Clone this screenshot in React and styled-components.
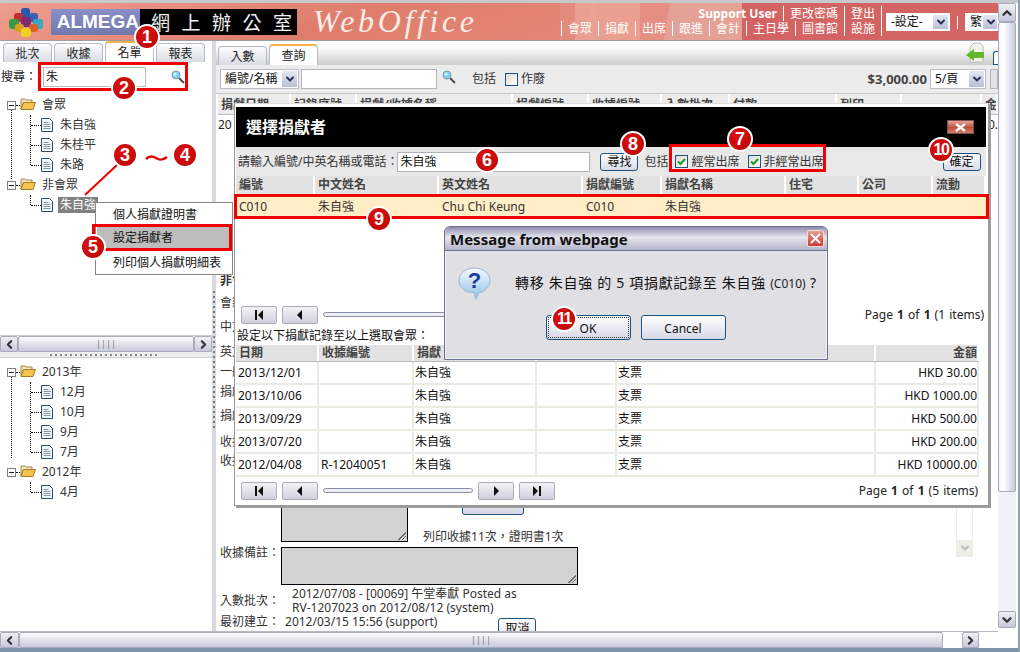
import styled, { createGlobalStyle } from 'styled-components'
import { ChevronUp, ChevronDown, ChevronLeft, ChevronRight } from 'lucide-react'

const FONT = `"Noto Sans", "Noto Sans CJK TC", sans-serif`

const GlobalStyle = createGlobalStyle`
    html, body {
        margin: 0;
        padding: 0;
        width: 1020px;
        height: 652px;
        overflow: hidden;
        background: #fff;
    }
    * { box-sizing: border-box; }
`

const Page = styled.div`
    position: relative;
    width: 1020px;
    height: 652px;
    overflow: hidden;
    display: flex;
    flex-direction: column;
    background: #fff;
    color: #222;
    font: 12px/16px ${FONT};
    border-right: 2px solid #8d9db0;
`
const TopStrip = styled.div`
    height: 3px;
    background: #c6c8cc;
    flex: none;
`
const Body = styled.div`
    flex: 1;
    min-height: 0;
    display: flex;
`
const BottomLine = styled.div`
    height: 4px;
    flex: none;
    background: #7f93a8;
`
const Window = styled.div`
    width: 998px;
    display: flex;
    flex-direction: column;
    min-width: 0;
`

/* header */
const Header = styled.header`
    height: 37px;
    flex: none;
    display: flex;
    align-items: center;
    overflow: hidden;
    background:
        linear-gradient(90deg, transparent 0 742px, #d46464 742px),
        linear-gradient(100deg, transparent 0 660px, #e5a195 660px 742px, transparent 742px),
        repeating-linear-gradient(90deg, transparent 0 590px, #eaa294 590px 596px, transparent 596px 612px),
        linear-gradient(90deg, transparent 0 560px, #e28c7d 560px 575px, #eb9f90 575px 640px, #e48f81 640px),
        linear-gradient(160deg, #ee9d8d 0%, #df7d6c 35%, #e58a78 70%, #e99684 100%);
`
const LogoWrap = styled.div`
    width: 51px;
    height: 37px;
    flex: none;
    display: flex;
    align-items: center;
    justify-content: center;
`
const Brand = styled.div`
    width: 89px;
    height: 26px;
    flex: none;
    background: linear-gradient(#8a90c6, #7278ae);
    color: #fff;
    font: bold 19px/26px "Liberation Sans", sans-serif;
    text-align: right;
    padding-right: 1px;
`
const BrandCn = styled.div`
    width: 157px;
    height: 26px;
    flex: none;
    background: #000;
    color: #f2f2f2;
    font: 19px/26px "Noto Sans CJK TC", serif;
    letter-spacing: 11.500px;
    padding-left: 11px;
    white-space: nowrap;
`
const WebOffice = styled.div`
    margin-left: 16px;
    width: 230px;
    flex: none;
    color: #f7ece6;
    font: italic 32px/37px "Liberation Serif", serif;
    letter-spacing: 3.600px;
`
const HeaderRight = styled.div`
    margin-left: auto;
    display: flex;
    align-items: flex-start;
    padding-top: 3px;
    height: 37px;
`
const NavStack = styled.div`
    display: flex;
    flex-direction: column;
    align-items: flex-end;
`
const NavLine = styled.div`
    display: flex;
    height: 15px;
    color: #fff;
    font-size: 12px;
    line-height: 15px;
    border-right: 1px solid #fff;
    margin-right: 1px;
`
const NavItem = styled.span`
    padding: 0 6px;
    border-left: ${p => (p.$plain ? 0 : '1px solid #fff')};
    font-weight: ${p => (p.$plain ? 700 : 400)};
    white-space: nowrap;
`
const HeaderSelects = styled.div`
    display: flex;
    align-items: center;
    gap: 7px;
    margin-left: 3px;
    padding-top: 7px;
`
const Pipe = styled.span`
    width: 1px;
    height: 13px;
    background: #fff;
`

/* fake select box */
const SelectBox = styled.div`
    width: ${p => p.$w}px;
    height: ${p => p.$h || 18}px;
    flex: none;
    display: flex;
    align-items: center;
    justify-content: space-between;
    background: #fff;
    border: 1px solid ${p => p.$line || '#b8bcc4'};
    padding-left: 4px;
    color: #111;
    font-size: 12px;
    white-space: nowrap;
    overflow: hidden;
`
const SelectArrow = styled.span`
    width: 17px;
    height: 100%;
    flex: none;
    display: flex;
    align-items: center;
    justify-content: center;
    background: linear-gradient(#e4e6f2, #b9bed6);
    border: 1px solid #fff;
    color: #2b3350;
`

/* main */
const Main = styled.div`
    flex: 1;
    min-height: 0;
    display: flex;
    border-top: 1px solid #9aa0a6;
`
const LeftPane = styled.aside`
    width: 212px;
    flex: none;
    display: flex;
    flex-direction: column;
`
const UpperPane = styled.div`
    height: 294px;
    flex: none;
    display: flex;
    flex-direction: column;
`
const TabStrip = styled.div`
    display: flex;
    align-items: flex-end;
    gap: 2px;
    padding-left: ${p => p.$pad}px;
    height: ${p => p.$h}px;
    flex: none;
    background: ${p => (p.$bar ? 'linear-gradient(#fff 20%, #cdcdcd)' : '#fff')};
`
const Tab = styled.div`
    width: 49px;
    height: ${p => (p.$active ? 21 : 19)}px;
    text-align: center;
    color: #222;
    font-size: 12px;
    line-height: 20px;
    border: 1px solid #b4bcc8;
    border-bottom: 0;
    border-radius: 4px 4px 0 0;
    background: ${p => (p.$active ? '#fff' : 'linear-gradient(#fdfdfd, #d9dbe4)')};
    border-top: ${p => (p.$active ? '2px solid #f3b24c' : '1px solid #b4bcc8')};
`
const SearchRow = styled.div`
    display: flex;
    align-items: center;
    height: 26px;
    margin-top: 2px;
    padding-left: 1px;
    flex: none;
`
const SearchInput = styled.div`
    width: 103px;
    height: 20px;
    margin-left: 6px;
    border: 1px solid #b8bcc4;
    padding-left: 2px;
    line-height: 18px;
`
const SearchSlot = styled.span`
    margin-left: 25px;
    display: flex;
`
const Tree = styled.div`
    position: relative;
    margin-top: ${p => p.$top}px;

    &::before {
        content: "";
        position: absolute;
        left: 11px;
        top: 14px;
        bottom: ${p => p.$lineEnd}px;
        border-left: 1px dotted #000;
    }
`
const TreeRow = styled.div`
    display: flex;
    align-items: center;
    height: 20px;
    color: #333;
    position: relative;
`
const Expander = styled.span`
    width: 9px;
    height: 9px;
    margin-left: 7px;
    flex: none;
    border: 1px solid #808080;
    background: #fff;
    position: relative;

    &::after {
        content: "";
        position: absolute;
        left: 1px;
        right: 1px;
        top: 3px;
        height: 1px;
        background: #222;
    }
`
const Stub = styled.span`
    width: ${p => p.$w}px;
    margin-left: ${p => p.$left || 0}px;
    flex: none;
    border-top: 1px dotted #000;
`
const RootLabel = styled.span`
    margin-left: 6px;
`
const TreeChildren = styled.div`
    position: relative;

    &::before {
        content: "";
        position: absolute;
        left: 30px;
        top: 0;
        bottom: 10px;
        border-left: 1px dotted #000;
    }
`
const LeafLabel = styled.span`
    margin-left: ${p => (p.$selected ? 5 : 7)}px;
    padding: 0 ${p => (p.$selected ? 2 : 0)}px;
    background: ${p => (p.$selected ? '#808080' : 'transparent')};
    color: ${p => (p.$selected ? '#fff' : '#333')};
`
const PaneScroll = styled.div`
    height: 17px;
    flex: none;
    display: flex;
    background: linear-gradient(#fbfbfd, #c9cadb);
    border-top: 1px solid #c8c8d0;
`
const ScrollBtn = styled.span`
    width: ${p => p.$w || 18}px;
    height: ${p => p.$h || 16}px;
    flex: none;
    display: flex;
    align-items: center;
    justify-content: center;
    color: #333;
    background: linear-gradient(#f0f0f6, #c6c8dc);
    border: 1px solid #a8acb8;
    border-radius: 2px;
`
const ScrollThumb = styled.span`
    flex: 1;
    border: 1px solid #a8acb8;
    border-radius: 2px;
    background: linear-gradient(#fbfbfd, #c9cadb);
    display: flex;
    align-items: center;
    justify-content: center;
    color: #777;
    font-size: 9px;
    line-height: 10px;
`
const HSplit = styled.div`
    height: 6px;
    flex: none;
    background: repeating-linear-gradient(90deg, #8a8a8a 0 2px, transparent 2px 5px) 50px 2px / 110px 2px no-repeat, #eeeeee;
    border-bottom: 1px solid #d0d0d0;
`
const Splitter = styled.div`
    width: 4px;
    flex: none;
    background: repeating-linear-gradient(#7a7a7a 0 2px, transparent 2px 5px) 1px 250px / 2px 140px no-repeat, #d8dae0;
`

/* right pane */
const RightPane = styled.section`
    flex: 1;
    min-width: 0;
    display: flex;
    flex-direction: column;
    overflow: hidden;
`
const GreenArrow = styled.span`
    margin-left: auto;
    margin-right: 1px;
    align-self: center;
    display: flex;
`
const PartTab = styled.span`
    width: 5px;
    height: 14px;
    flex: none;
    border: 1px solid #1c5180;
    border-right: 0;
    border-radius: 3px 0 0 0;
    background: #fff;
`
const Toolbar = styled.div`
    height: 29px;
    flex: none;
    display: flex;
    align-items: center;
    padding: 0 0 0 4px;
    background: #ececec;
    border-bottom: 1px solid #c8c8c8;
`
const PlainInput = styled.div`
    width: ${p => p.$w}px;
    height: ${p => p.$h || 20}px;
    margin-left: ${p => p.$left || 0}px;
    flex: none;
    background: ${p => p.$bg || '#fff'};
    border: 1px solid #b0b4ba;
    padding-left: 2px;
    line-height: ${p => (p.$h || 20) - 2}px;
    color: #111;
`
const ToolText = styled.span`
    margin-left: ${p => p.$left || 0}px;
    color: #333;
    white-space: nowrap;
`
const Amount = styled.b`
    margin-left: auto;
    margin-right: 3px;
    color: #444;
    font-size: 13px;
`
const CheckBox = styled.span`
    width: 13px;
    height: 13px;
    flex: none;
    margin-left: ${p => p.$left || 0}px;
    margin-right: 3px;
    border: 1px solid #1c5180;
    background: linear-gradient(135deg, #dcdcd4, #fff);
    display: flex;
`
const GridHead = styled.div`
    display: grid;
    grid-template-columns: ${p => p.$cols};
    height: ${p => p.$h}px;
    flex: none;
    margin-left: ${p => p.$left || 0}px;
    margin-right: ${p => p.$right || 0}px;
    background: ${p => p.$bg || '#e2e2e2'};
    border-bottom: 1px solid #bbb;
    font-weight: 700;
    color: #444;
`
const HeadCell = styled.div`
    padding: 0 ${p => (p.$align === 'right' ? 0 : 3)}px 0 3px;
    border-right: 2px solid #fff;
    overflow: hidden;
    white-space: nowrap;
    text-align: ${p => p.$align || 'left'};
    line-height: ${p => p.$lh}px;
`
const OuterRow = styled.div`
    height: 19px;
    flex: none;
    display: flex;
    justify-content: space-between;
    padding: 0 0 0 2px;
    line-height: 19px;
`
const FormWrap = styled.div`
    display: flex;
    flex: 1;
    min-height: 0;
    padding: 139px 0 0 4px;
`
const FormCol = styled.div`
    width: 420px;
    flex: none;
    display: flex;
    flex-direction: column;
    color: #333;
`
const FormLabel = styled.div`
    height: ${p => p.$h}px;
    flex: none;
    line-height: 16px;
    font-weight: ${p => (p.$bold ? 700 : 400)};
`
const AreaRow = styled.div`
    display: flex;
    align-items: flex-start;
    margin-top: ${p => p.$top || 0}px;
`
const GrayArea = styled.div`
    width: ${p => p.$w}px;
    height: ${p => p.$h}px;
    margin-left: ${p => p.$left}px;
    flex: none;
    position: relative;
    background: #d2d2d2;
    border: 1px solid #000;
`
const Grip = styled.span`
    position: absolute;
    right: 1px;
    bottom: 1px;
    width: 8px;
    height: 8px;
    background: linear-gradient(135deg, transparent 50%, #666 50% 58%, transparent 58% 70%, #666 70% 78%, transparent 78%);
`
const NoteCol = styled.div`
    width: 190px;
    flex: none;
    align-self: flex-end;
    margin-bottom: -3px;
    padding-left: 15px;
    display: flex;
    flex-direction: column;
`
const HiddenBtn = styled.div`
    width: 62px;
    height: 40px;
    margin: 0 0 14px 39px;
    border: 1px solid #1c5180;
    border-radius: 3px;
    background: linear-gradient(#fff, #d8d8e8);
`
const MetaRow = styled.div`
    display: flex;
    align-items: flex-start;
    margin-top: ${p => p.$top || 0}px;
    white-space: nowrap;
`
const MetaLabel = styled.span`
    flex: none;
    margin-top: ${p => p.$top || 0}px;
`
const MetaValue = styled.span`
    margin-left: ${p => p.$left}px;
    margin-top: ${p => p.$top || 0}px;
    line-height: 14px;
`
const CutButton = styled.div`
    margin: 4px 0 0 61px;
    width: 38px;
    height: 20px;
    flex: none;
    border: 1px solid #1c5180;
    border-radius: 3px;
    text-align: center;
    background: linear-gradient(#fff, #e8e8f0);
    color: #111;
    line-height: 19px;
`
const FaintScroll = styled.div`
    margin: 130px 0 0 316px;
    width: 17px;
    height: 154px;
    flex: none;
    display: flex;
    align-items: flex-end;
    border: 1px solid #eeeee6;
    border-top: 0;
    color: #bbb;
`
const FaintBtn = styled.span`
    width: 15px;
    height: 16px;
    display: flex;
    align-items: center;
    justify-content: center;
    background: #eeeee6;
`

/* window scrollbars */
const WinHScroll = styled.div`
    height: 17px;
    flex: none;
    display: flex;
    background: linear-gradient(#fbfbfd, #c9cadb);
    border-top: 1px solid #b8bac4;
`
const WinHTail = styled.span`
    width: 19px;
    flex: none;
    background: #fff;
`
const VScroll = styled.div`
    width: 18px;
    flex: none;
    display: flex;
    flex-direction: column;
    background: #f1f2f8;
    height: 625px;
`
const VThumb = styled.div`
    height: 470px;
    flex: none;
    border: 1px solid #a8acb8;
    border-radius: 2px;
    background: linear-gradient(90deg, #f6f6fa, #ffffff 30%, #c8c9dc);
`
const VGap = styled.div`
    flex: 1;
`

/* dialog */
const Dialog = styled.div`
    position: absolute;
    left: 234px;
    top: 103px;
    width: 755px;
    height: 403px;
    display: flex;
    flex-direction: column;
    padding: 3px 1px 0;
    background: #fff;
    border: 1px solid #999;
    border-top-color: #ddd;
    box-shadow: 2px 2px 0 #9c9c9c;
    color: #111;
`
const DialogTitle = styled.div`
    height: 40px;
    flex: none;
    display: flex;
    align-items: center;
    justify-content: space-between;
    padding: 0 12px 0 10px;
    background: #000;
    color: #fff;
    font-size: 16px;
    font-weight: 700;
    margin-right: 1px;
`
const CloseBtn = styled.span`
    width: 27px;
    height: 14px;
    display: flex;
    align-items: center;
    justify-content: center;
    background: linear-gradient(#e3a498, #bf4e3e 55%, #d67a6b);
    border: 1px solid #7b5150;
`
const DialogBar = styled.div`
    height: 29px;
    flex: none;
    display: flex;
    align-items: center;
    padding: 0 6px 0 2px;
    background: #e8e8e8;
    margin-right: 1px;
    color: #333;
    white-space: nowrap;
`
const XpButton = styled.div`
    width: ${p => p.$w}px;
    height: ${p => p.$h}px;
    margin-left: ${p => p.$left || 0}px;
    flex: none;
    text-align: center;
    line-height: ${p => p.$h - 2}px;
    color: #111;
    border: 1px solid #1c5180;
    border-radius: 3px;
    background: linear-gradient(#fff, #d8dae8);
`
const GridRow = styled.div`
    display: grid;
    grid-template-columns: ${p => p.$cols};
    height: ${p => p.$h}px;
    flex: none;
    margin-top: ${p => p.$top || 0}px;
    margin-right: ${p => p.$right || 0}px;
    background: ${p => p.$bg || '#fff'};
    border-bottom: 2px solid ${p => p.$line || '#ebebe4'};
    line-height: ${p => p.$h - 2}px;
`
const Cell = styled.div`
    padding: 0 ${p => (p.$align === 'right' ? 0 : 1)}px 0 ${p => p.$pad ?? 2}px;
    border-right: ${p => (p.$bare ? 0 : '2px solid #ebebe4')};
    text-align: ${p => p.$align || 'left'};
    overflow: hidden;
    white-space: nowrap;
    color: ${p => p.$color || '#111'};
`
const Pager = styled.div`
    height: 17px;
    flex: none;
    display: flex;
    align-items: center;
    gap: 5px;
    margin-top: ${p => p.$top}px;
    padding: 0 ${p => p.$right}px 0 5px;
`
const PagerBtn = styled.span`
    width: 36px;
    height: 18px;
    flex: none;
    display: flex;
    align-items: center;
    justify-content: center;
    border: 1px solid #a8acbc;
    border-radius: 2px;
    background: linear-gradient(#f2f2f6, #cfd0de);
`
const Slider = styled.span`
    width: 150px;
    height: 5px;
    flex: none;
    border: 1px solid #8a8ea6;
    border-radius: 3px;
    background: #eceef4;
`
const PageInfo = styled.span`
    margin-left: auto;
    color: #222;
    word-spacing: 1px;
`
const DialogNote = styled.div`
    height: 18px;
    flex: none;
    margin-top: 4px;
    padding-left: 1px;
    line-height: 18px;
`

/* context menu */
const ContextMenu = styled.div`
    position: absolute;
    left: 95px;
    top: 202px;
    width: 138px;
    height: 73px;
    padding: 1px;
    background: #fff;
    border: 1px solid #888;
    color: #111;
`
const MenuItem = styled.div`
    height: ${p => p.$h}px;
    margin-top: ${p => p.$gap || 0}px;
    line-height: ${p => p.$h}px;
    padding-left: 16px;
    background: ${p => (p.$active ? '#bdbdbd' : '#fff')};
`

/* alert */
const MessageBox = styled.div`
    position: absolute;
    left: 444px;
    top: 226px;
    width: 384px;
    height: 134px;
    display: flex;
    flex-direction: column;
    background: #e0dfe4;
    border: 1px solid #6a7090;
    border-radius: 6px 6px 0 0;
    box-shadow: inset 0 0 0 1px #f2f2f6;
`
const MessageTitle = styled.div`
    height: 24px;
    flex: none;
    display: flex;
    align-items: center;
    justify-content: space-between;
    padding: 0 3px 0 5px;
    border-bottom: 1px solid #6a7090;
    border-radius: 5px 5px 0 0;
    background: linear-gradient(#8c8cae, #e6e6ee 45%, #b3b3c8);
    font: bold 15px/24px "Noto Sans", sans-serif;
    color: #111;
`
const MessageClose = styled.span`
    width: 17px;
    height: 17px;
    display: flex;
    align-items: center;
    justify-content: center;
    border: 1px solid #f4dcd8;
    border-radius: 2px;
    background: linear-gradient(#ec9c8c, #c83c30);
`
const MessageBody = styled.div`
    display: flex;
    align-items: center;
    height: 64px;
    flex: none;
    padding: 0 0 0 13px;
    color: #111;
`
const MessageText = styled.span`
    margin-left: 24px;
    white-space: nowrap;
    font-size: 14px;
    letter-spacing: .7px;
`
const MessageLatin = styled.span`
    font-size: 12px;
    letter-spacing: 0;
    color: #222;
`
const MessageButtons = styled.div`
    display: flex;
    justify-content: center;
    gap: 10px;
    padding-right: 1px;
`
const AlertButton = styled.div`
    width: 85px;
    height: 25px;
    text-align: center;
    line-height: 25px;
    color: #111;
    font-size: 12px;
    border: 1px solid #1c5180;
    border-radius: 3px;
    background: linear-gradient(#fff, #d8d8e8);
    outline: ${p => (p.$focus ? '1px dotted #333' : 'none')};
    outline-offset: -3px;
`

/* annotations drawn over the shot */
const Badge = styled.span`
    position: absolute;
    left: ${p => p.$x - 13}px;
    top: ${p => p.$y - 13}px;
    width: 26px;
    height: 26px;
    border-radius: 50%;
    border: 2px solid #fff;
    background: radial-gradient(circle at 40% 35%, #dd1010, #b80606);
    color: #fff;
    font: bold ${p => (p.$n > 9 ? 16 : 18)}px/22px "Liberation Sans", sans-serif;
    letter-spacing: ${p => (p.$n > 9 ? -1.5 : 0)}px;
    text-align: center;
`
const RedBox = styled.span`
    position: absolute;
    left: ${p => p.$x}px;
    top: ${p => p.$y}px;
    width: ${p => p.$w}px;
    height: ${p => p.$h}px;
    border: 3px solid #f00000;
`
const RedInk = styled.svg`
    position: absolute;
    left: 0;
    top: 0;
`

const MagnifierIcon = () => (
    <svg width="14" height="14" viewBox="0 0 14 14">
        <path d="M8 8l5 5" stroke="#445" strokeWidth="1.8" />
        <circle cx="5" cy="5" r="4" fill="#7fd4ee" stroke="#7d9aa8" />
        <circle cx="4" cy="4" r="1.6" fill="#d8f4fc" />
    </svg>
)

const FolderIcon = () => (
    <svg width="16" height="13" viewBox="0 0 16 13">
        <path d="M1 2h4l1 1h6v3H3L1 12z" fill="#f2e3b0" stroke="#a08a50" />
        <path d="M3.500 5.500H15.500L13 12.500H1z" fill="#f3c34e" stroke="#a57f2a" strokeLinejoin="round" />
    </svg>
)

const DocIcon = () => (
    <svg width="12" height="14" viewBox="0 0 12 14">
        <path d="M.5.5h8l3 3v10H.5z" fill="#f4f6fa" stroke="#2d4a68" />
        <path d="M2.500 4.500h5M2.500 6.500h7M2.500 8.500h7M2.500 10.500h7" stroke="#8096ac" />
    </svg>
)

const CheckMark = () => (
    <svg width="11" height="11" viewBox="0 0 11 11">
        <path d="M2 5.500l2.500 2.500L9 3" fill="none" stroke="#1e9a2c" strokeWidth="2" />
    </svg>
)

const PagerGlyph = ({ kind }) => (
    <svg width="12" height="10" viewBox="0 0 12 10">
        {kind === 'first' && <path d="M2 0h2v10H2zM10 0v10L5 5z" fill="#111" />}
        {kind === 'prev' && <path d="M8 0v10L3 5z" fill="#111" />}
        {kind === 'next' && <path d="M4 0v10l5-5z" fill="#111" />}
        {kind === 'last' && <path d="M2 0v10l5-5zM8 0h2v10H8z" fill="#111" />}
    </svg>
)

const Logo = () => (
    <svg width="34" height="30" viewBox="0 0 34 30">
        <rect x="12" y="1" width="9" height="10" rx="3" fill="#2a58a8" />
        <rect x="5" y="6" width="9" height="9" rx="3" fill="#c03030" />
        <rect x="20" y="6" width="9" height="9" rx="3" fill="#3a5fb8" />
        <rect x="0" y="12" width="10" height="10" rx="3" fill="#3a9a48" />
        <rect x="24" y="12" width="10" height="10" rx="3" fill="#38a8c8" />
        <rect x="12" y="10" width="10" height="10" rx="3" fill="#802a70" />
        <rect x="6" y="17" width="9" height="8" rx="3" fill="#d8a020" />
        <rect x="20" y="17" width="9" height="8" rx="3" fill="#d86028" />
        <rect x="12" y="21" width="10" height="9" rx="3" fill="#f2d020" />
    </svg>
)

const QuestionIcon = () => (
    <svg width="33" height="33" viewBox="0 0 33 33">
        <defs>
            <linearGradient id="bubble" x1="0" y1="0" x2="0" y2="1">
                <stop offset="0" stopColor="#f6fbff" />
                <stop offset="1" stopColor="#8fc0e6" />
            </linearGradient>
        </defs>
        <path d="M16.500 1C25 1 32 6.500 32 13.500S25 26 21 25.500l-3 6.500-2-6.500C7 26 1 20.500 1 13.500S8 1 16.500 1z" fill="url(#bubble)" stroke="#9ab8d0" />
        <text x="16.500" y="21" textAnchor="middle" fontSize="22" fontWeight="700" fontFamily="Liberation Sans" fill="#173a9a">?</text>
    </svg>
)

const ArrowBack = () => (
    <svg width="24" height="22" viewBox="0 0 24 22">
        <path d="M8 1h6l3 3v16H4V5z" fill="#f2f2ec" stroke="#bbb" />
        <path d="M0 13l8-6v3h10v6H8v3z" fill="#62b82c" />
    </svg>
)

const RootNode = ({ label, children }) => (
    <>
        <TreeRow>
            <Expander />
            <Stub $w={4} />
            <span><FolderIcon /></span>
            <RootLabel>{label}</RootLabel>
        </TreeRow>
        <TreeChildren>{children}</TreeChildren>
    </>
)

const Leaf = ({ label, selected }) => (
    <TreeRow>
        <Stub $w={10} $left={31} />
        <DocIcon />
        <LeafLabel $selected={selected}>{label}</LeafLabel>
    </TreeRow>
)

const TopTree = () => (
    <Tree $top={5} $lineEnd={36}>
        <RootNode label="會眾">
            <Leaf label="朱自強" />
            <Leaf label="朱桂平" />
            <Leaf label="朱路" />
        </RootNode>
        <RootNode label="非會眾">
            <Leaf label="朱自強" selected />
        </RootNode>
    </Tree>
)

const BottomTree = () => (
    <Tree $top={4} $lineEnd={44}>
        <RootNode label="2013年">
            <Leaf label="12月" />
            <Leaf label="10月" />
            <Leaf label="9月" />
            <Leaf label="7月" />
        </RootNode>
        <RootNode label="2012年">
            <Leaf label="4月" />
        </RootNode>
    </Tree>
)

const NAV_TOP = ['更改密碼', '登出']
const NAV_BOTTOM = ['會眾', '捐獻', '出席', '跟進', '會計', '主日學', '圖書館', '設施']

const OUTER_COLS = '73px 66px 156px 76px 73px 68px 107px 65px 80px 1fr'
const OUTER_HEAD = ['捐獻日期', '記錄序號', '捐獻/收據名稱', '捐獻編號', '收據編號', '入數批次', '付款', '列印', '', '金額']

const PICK_COLS = '79px 124px 144px 79px 124px 73px 74px 1fr'
const PICK_HEAD = ['編號', '中文姓名', '英文姓名', '捐獻編號', '捐獻名稱', '住宅', '公司', '流動']
const PICK_ROW = ['C010', '朱自強', 'Chu Chi Keung', 'C010', '朱自強', '', '', '']

const REC_COLS = '83px 95px 123px 80px 259px 103px'
const REC_HEAD = ['日期', '收據編號', '捐獻', '', '', '金額']
const RECORDS = [
    ['2013/12/01', '', 'HKD 30.00'],
    ['2013/10/06', '', 'HKD 1000.00'],
    ['2013/09/29', '', 'HKD 500.00'],
    ['2013/07/20', '', 'HKD 200.00'],
    ['2012/04/08', 'R-12040051', 'HKD 10000.00'],
]

const BADGES = [
    { n: 1, x: 147, y: 37 },
    { n: 2, x: 124, y: 88 },
    { n: 3, x: 125, y: 155 },
    { n: 4, x: 185, y: 155 },
    { n: 5, x: 93, y: 247 },
    { n: 6, x: 487, y: 160 },
    { n: 7, x: 740, y: 139 },
    { n: 8, x: 633, y: 144 },
    { n: 9, x: 379, y: 219 },
    { n: 10, x: 941, y: 150 },
    { n: 11, x: 564, y: 319 },
]

const PagerRow = ({ top, right, info }) => (
    <Pager $top={top} $right={right}>
        <PagerBtn><PagerGlyph kind="first" /></PagerBtn>
        <PagerBtn><PagerGlyph kind="prev" /></PagerBtn>
        <Slider />
        <PagerBtn><PagerGlyph kind="next" /></PagerBtn>
        <PagerBtn><PagerGlyph kind="last" /></PagerBtn>
        <PageInfo>Page <b>1</b> of <b>1</b> ({info} items)</PageInfo>
    </Pager>
)

const App = () => {
    return (
        <Page>
            <GlobalStyle />
            <TopStrip />
            <Body>
                <Window>
                    <Header>
                        <LogoWrap><Logo /></LogoWrap>
                        <Brand>ALMEGA</Brand>
                        <BrandCn>網上辦公室</BrandCn>
                        <WebOffice>WebOffice</WebOffice>
                        <HeaderRight>
                            <NavStack>
                                <NavLine>
                                    <NavItem $plain>Support User</NavItem>
                                    {NAV_TOP.map(t => <NavItem key={t}>{t}</NavItem>)}
                                </NavLine>
                                <NavLine>
                                    {NAV_BOTTOM.map(t => <NavItem key={t}>{t}</NavItem>)}
                                </NavLine>
                            </NavStack>
                            <HeaderSelects>
                                <SelectBox $w={64} $line="#fff">-設定-<SelectArrow><ChevronDown size={12} strokeWidth={4} /></SelectArrow></SelectBox>
                                <Pipe />
                                <SelectBox $w={33} $line="#fff">繁<SelectArrow><ChevronDown size={12} strokeWidth={4} /></SelectArrow></SelectBox>
                            </HeaderSelects>
                        </HeaderRight>
                    </Header>
                    <Main>
                        <LeftPane>
                            <UpperPane>
                                <TabStrip $pad={3} $h={21}>
                                    <Tab>批次</Tab>
                                    <Tab>收據</Tab>
                                    <Tab $active>名單</Tab>
                                    <Tab>報表</Tab>
                                </TabStrip>
                                <SearchRow>
                                    搜尋：
                                    <SearchInput>朱</SearchInput>
                                    <SearchSlot><MagnifierIcon /></SearchSlot>
                                </SearchRow>
                                <TopTree />
                            </UpperPane>
                            <PaneScroll>
                                <ScrollBtn><ChevronLeft size={13} strokeWidth={4} /></ScrollBtn>
                                <ScrollThumb>||||</ScrollThumb>
                                <ScrollBtn><ChevronRight size={13} strokeWidth={4} /></ScrollBtn>
                            </PaneScroll>
                            <HSplit />
                            <BottomTree />
                        </LeftPane>
                        <Splitter />
                        <RightPane>
                            <TabStrip $pad={2} $h={24} $bar>
                                <Tab>入數</Tab>
                                <Tab $active>查詢</Tab>
                                <GreenArrow><ArrowBack /></GreenArrow>
                                <PartTab />
                            </TabStrip>
                            <Toolbar>
                                <SelectBox $w={79} $h={20}>編號/名稱<SelectArrow><ChevronDown size={12} strokeWidth={4} /></SelectArrow></SelectBox>
                                <PlainInput $w={136} $left={2} />
                                <ToolText $left={5}><MagnifierIcon /></ToolText>
                                <ToolText $left={16}>包括</ToolText>
                                <CheckBox $left={9} />
                                <ToolText>作廢</ToolText>
                                <Amount>$3,000.00</Amount>
                                <SelectBox $w={56} $h={20}>5/頁<SelectArrow><ChevronDown size={12} strokeWidth={4} /></SelectArrow></SelectBox>
                                <PlainInput $w={8} $left={4} $bg="#e2e2e2" />
                            </Toolbar>
                            <GridHead $cols={OUTER_COLS} $h={21} $left={2} $bg="#ececec">
                                {OUTER_HEAD.map((t, i) => <HeadCell key={i} $lh={21}>{t}</HeadCell>)}
                            </GridHead>
                            <OuterRow><span>20</span><span>0.</span></OuterRow>
                            <FormWrap>
                                <FormCol>
                                    <FormLabel $h={22} $bold>非會眾</FormLabel>
                                    <FormLabel $h={24}>會籍：</FormLabel>
                                    <FormLabel $h={25}>中文姓名：</FormLabel>
                                    <FormLabel $h={20}>英文姓名：</FormLabel>
                                    <FormLabel $h={20}>一般捐獻：</FormLabel>
                                    <FormLabel $h={24}>捐獻編號：</FormLabel>
                                    <FormLabel $h={26}>捐獻名稱：</FormLabel>
                                    <FormLabel $h={19}>收據編號：</FormLabel>
                                    <AreaRow>
                                        <MetaLabel>收據抬頭：</MetaLabel>
                                        <GrayArea $w={127} $h={89} $left={1}><Grip /></GrayArea>
                                        <NoteCol>
                                            <HiddenBtn />
                                            <span>列印收據11次，證明書1次</span>
                                        </NoteCol>
                                    </AreaRow>
                                    <AreaRow $top={5}>
                                        <MetaLabel $top={-2}>收據備註：</MetaLabel>
                                        <GrayArea $w={297} $h={38} $left={1}><Grip /></GrayArea>
                                    </AreaRow>
                                    <MetaRow $top={2}>
                                        <MetaLabel $top={6}>入數批次：</MetaLabel>
                                        <MetaValue $left={12}>2012/07/08 - [00069] 午堂奉獻 Posted as<br />RV-1207023 on 2012/08/12 (system)</MetaValue>
                                    </MetaRow>
                                    <MetaRow $top={-1}>
                                        <MetaLabel>最初建立：</MetaLabel>
                                        <MetaValue $left={5} $top={1}>2012/03/15 15:56 (support)</MetaValue>
                                        <CutButton>取消</CutButton>
                                    </MetaRow>
                                </FormCol>
                                <FaintScroll>
                                    <FaintBtn><ChevronDown size={12} strokeWidth={4} /></FaintBtn>
                                </FaintScroll>
                            </FormWrap>
                        </RightPane>
                    </Main>
                    <WinHScroll>
                        <ScrollBtn $w={19}><ChevronLeft size={13} strokeWidth={4} /></ScrollBtn>
                        <ScrollThumb>||||</ScrollThumb>
                        <WinHTail />
                        <ScrollBtn $w={17}><ChevronRight size={13} strokeWidth={4} /></ScrollBtn>
                        <WinHTail />
                    </WinHScroll>
                </Window>
                <VScroll>
                    <ScrollBtn $w={18} $h={19}><ChevronUp size={14} strokeWidth={4} /></ScrollBtn>
                    <VThumb />
                    <VGap />
                    <ScrollBtn $w={18} $h={17}><ChevronDown size={14} strokeWidth={4} /></ScrollBtn>
                </VScroll>
            </Body>
            <BottomLine />

            <Dialog>
                <DialogTitle>
                    選擇捐獻者
                    <CloseBtn>
                        <svg width="13" height="9" viewBox="0 0 13 9"><path d="M2 1l9 7M11 1L2 8" stroke="#fff" strokeWidth="2.400" /></svg>
                    </CloseBtn>
                </DialogTitle>
                <DialogBar>
                    請輸入編號/中英名稱或電話：
                    <PlainInput $w={193} $h={20} $left={-1}>朱自強</PlainInput>
                    <XpButton $w={38} $h={18} $left={10}>尋找</XpButton>
                    <ToolText $left={6}>包括</ToolText>
                    <CheckBox $left={7}><CheckMark /></CheckBox>
                    經常出席
                    <CheckBox $left={8}><CheckMark /></CheckBox>
                    非經常出席
                    <XpButton $w={38} $h={18} $left={119}>確定</XpButton>
                </DialogBar>
                <GridHead $cols={PICK_COLS} $h={19} $right={1}>
                    {PICK_HEAD.map(t => <HeadCell key={t} $lh={18}>{t}</HeadCell>)}
                </GridHead>
                <GridRow $cols={PICK_COLS} $h={23} $top={1} $right={1} $bg="#ffeec6" $line="#ffeec6">
                    {PICK_ROW.map((t, i) => <Cell key={i} $pad={3} $color="#333" $bare>{t}</Cell>)}
                </GridRow>
                <PagerRow top={87} right={3} info={1} />
                <DialogNote>設定以下捐獻記錄至以上選取會眾：</DialogNote>
                <GridHead $cols={REC_COLS} $h={17} $right={8}>
                    {REC_HEAD.map((t, i) => <HeadCell key={i} $lh={16} $align={i === 5 ? 'right' : 'left'}>{t}</HeadCell>)}
                </GridHead>
                {RECORDS.map(r => (
                    <GridRow key={r[0]} $cols={REC_COLS} $h={23} $right={8}>
                        <Cell>{r[0]}</Cell>
                        <Cell>{r[1]}</Cell>
                        <Cell $pad={1}>朱自強</Cell>
                        <Cell />
                        <Cell $pad={1}>支票</Cell>
                        <Cell $align="right">{r[2]}</Cell>
                    </GridRow>
                ))}
                <PagerRow top={5} right={9} info={5} />
            </Dialog>

            <ContextMenu>
                <MenuItem $h={22}>個人捐獻證明書</MenuItem>
                <MenuItem $h={24} $active>設定捐獻者</MenuItem>
                <MenuItem $h={20} $gap={3}>列印個人捐獻明細表</MenuItem>
            </ContextMenu>

            <MessageBox>
                <MessageTitle>
                    Message from webpage
                    <MessageClose>
                        <svg width="13" height="13" viewBox="0 0 13 13"><path d="M2 2l9 9M11 2l-9 9" stroke="#fff" strokeWidth="2" /></svg>
                    </MessageClose>
                </MessageTitle>
                <MessageBody>
                    <QuestionIcon />
                    <MessageText>轉移 朱自強 的 5 項捐獻記錄至 朱自強 <MessageLatin>(C010)</MessageLatin> ?</MessageText>
                </MessageBody>
                <MessageButtons>
                    <AlertButton $focus>OK</AlertButton>
                    <AlertButton>Cancel</AlertButton>
                </MessageButtons>
            </MessageBox>

            <RedBox $x={38} $y={62} $w={150} $h={29} />
            <RedBox $x={92} $y={224} $w={140} $h={27} />
            <RedBox $x={669} $y={144} $w={157} $h={28} />
            <RedBox $x={234} $y={194} $w={755} $h={25} />
            <RedInk width="240" height="220" viewBox="0 0 240 220">
                <path d="M118 164L85 195" stroke="#f00000" strokeWidth="2" fill="none" />
                <path d="M146 159c4-4 7-3 10-1s6 3 11-1" stroke="#e00000" strokeWidth="2.500" fill="none" />
            </RedInk>
            {BADGES.map(b => <Badge key={b.n} $n={b.n} $x={b.x} $y={b.y}>{b.n}</Badge>)}
        </Page>
    )
}

export default App
